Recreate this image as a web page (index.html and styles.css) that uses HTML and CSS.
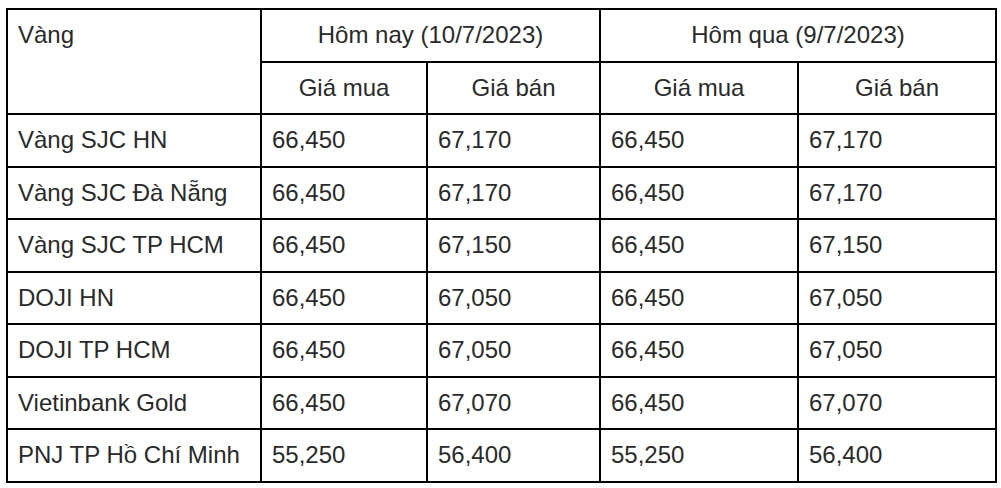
FILE: index.html
```html
<!DOCTYPE html>
<html lang="vi">
<head>
<meta charset="utf-8">
<title>Giá vàng</title>
<link rel="stylesheet" href="styles.css">
</head>
<body>
<table class="gold">
  <colgroup>
    <col class="c-name">
    <col class="c-a">
    <col class="c-b">
    <col class="c-c">
    <col class="c-d">
  </colgroup>
  <thead>
    <tr>
      <th rowspan="2" class="top-left">Vàng</th>
      <th colspan="2">Hôm nay (10/7/2023)</th>
      <th colspan="2">Hôm qua (9/7/2023)</th>
    </tr>
    <tr>
      <th>Giá mua</th>
      <th>Giá bán</th>
      <th>Giá mua</th>
      <th>Giá bán</th>
    </tr>
  </thead>
  <tbody>
    <tr><td>Vàng SJC HN</td><td>66,450</td><td>67,170</td><td>66,450</td><td>67,170</td></tr>
    <tr><td>Vàng SJC Đà Nẵng</td><td>66,450</td><td>67,170</td><td>66,450</td><td>67,170</td></tr>
    <tr><td>Vàng SJC TP HCM</td><td>66,450</td><td>67,150</td><td>66,450</td><td>67,150</td></tr>
    <tr><td>DOJI HN</td><td>66,450</td><td>67,050</td><td>66,450</td><td>67,050</td></tr>
    <tr><td>DOJI TP HCM</td><td>66,450</td><td>67,050</td><td>66,450</td><td>67,050</td></tr>
    <tr><td>Vietinbank Gold</td><td>66,450</td><td>67,070</td><td>66,450</td><td>67,070</td></tr>
    <tr><td>PNJ TP Hồ Chí Minh</td><td>55,250</td><td>56,400</td><td>55,250</td><td>56,400</td></tr>
  </tbody>
</table>
</body>
</html>
```

FILE: styles.css
```css
html, body {
  margin: 0;
  padding: 0;
  background: #fff;
}

body {
  padding: 8px 0 0 6px;
  font-family: "Liberation Sans", Arial, sans-serif;
  font-size: 24px;
  color: #2a2a2a;
}

.gold {
  border-collapse: collapse;
  table-layout: fixed;
  width: 991px;
}

.c-name { width: 254px; }
.c-a { width: 166px; }
.c-b { width: 173px; }
.c-c { width: 198px; }
.c-d { width: 198px; }

.gold th,
.gold td {
  border: 2px solid #000;
  padding: 12px 10px;
  line-height: 26.5px;
  font-weight: normal;
  white-space: nowrap;
}

.gold th {
  text-align: center;
}

.gold td {
  text-align: left;
}

.gold th.top-left {
  text-align: left;
  vertical-align: top;
}
```
